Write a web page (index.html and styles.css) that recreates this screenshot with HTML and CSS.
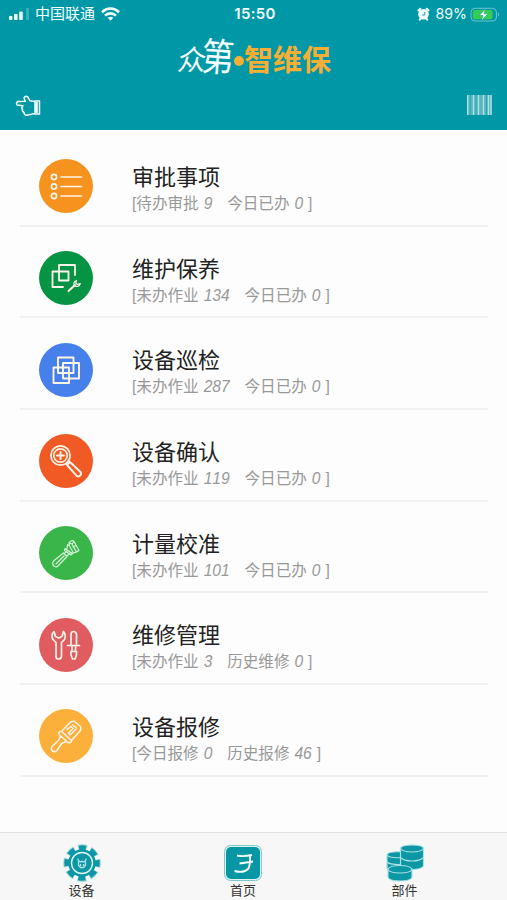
FILE: index.html
```html
<!DOCTYPE html>
<html lang="zh-CN">
<head>
<meta charset="utf-8">
<title>众第·智维保</title>
<link rel="stylesheet" href="styles.css">
</head>
<body>
<div class="app">
  <header class="header">
    <div class="status">
      <div class="status-left">
        <svg class="signal" width="21" height="13" viewBox="0 0 21 13" fill="#e8f8f9"><rect x="0" y="8" width="3.4" height="4" rx=".8"/><rect x="5" y="6" width="3.6" height="6" rx=".8"/><rect x="10.2" y="3.5" width="3.6" height="8.500" rx=".8"/><rect x="17" y="0" width="3" height="12" rx=".8" opacity=".25"/></svg>
        <span class="carrier">中国联通</span>
        <svg class="wifi" width="19" height="14" viewBox="0 0 19 14" fill="none" stroke="#f4ffff" stroke-width="2.600"><path d="M1 5.200C6 .3 13 .3 18 5.200M4 8.600C7.200 5.600 11.800 5.600 15 8.600"/><path d="M6.700 10.800Q9.500 8.500 12.300 10.800L9.500 13.700Z" fill="#f4ffff" stroke="none"/></svg>
      </div>
      <div class="clock">15:50</div>
      <div class="status-right">
        <svg width="13" height="14" viewBox="0 0 13 14"><circle cx="6.500" cy="7.300" r="5.300" fill="#f4ffff"/><path d="M1.500 3.500 3.300 1.800M9.700 1.800l1.800 1.700M2.800 12.700l1.200-1.500m6.200 1.500L9 11.200" stroke="#f4ffff" stroke-width="2" stroke-linecap="round"/><path d="M7.800 5V8H5" fill="none" stroke="#0098a6" stroke-width=".9"/></svg>
        <span class="percent">89%</span>
        <svg width="31" height="15" viewBox="0 0 31 15"><rect x="1" y="1.300" width="25.500" height="12.700" rx="4" fill="none" stroke="#6cc3cb"/><path d="M28 5.300q2.300 2.200 0 4.400z" fill="#6cc3cb"/><rect x="2.800" y="3" width="19.700" height="9.300" rx="2.300" fill="#34ce50"/><path d="M15.500 2 9 8.500h4L11.500 13.400 18 6.800h-4z" fill="#fff" stroke="#14a390" stroke-width=".6"/></svg>
      </div>
    </div>
    <div class="logo"><span class="logo-a">众</span><span class="logo-b">第</span><i class="dot"></i><span class="logo-c">智维保</span></div>
    <div class="actions">
      <svg width="27" height="23" viewBox="0 0 27 23" fill="none" stroke="#f4ffff" stroke-width="1.500" stroke-linejoin="round"><path d="M20 6.500 15 5.800 12.500 1.700Q10 .6 9 3L10.300 6.200 3 6.500Q.7 7.700 2 10L8 10.700Q6 12.500 7.500 14.300Q6.800 16.300 9 17.500Q9 20 12 20.300L20 18.500"/><path d="M20 6h4.500v13H20z"/><path d="M21.500 7v11" stroke-width="2.600"/></svg>
      <svg width="27" height="20" viewBox="0 0 27 20"><rect x="1" y="0" width="25" height="20" fill="#54b8c1"/><path d="M1.700 0v20M7.500 0v20M12.500 0v20M17.500 0v20M22.500 0v20M25 0v20" stroke="#b5e0e4" stroke-width="1.300"/><path d="M4.200 0v20M10 0v20M20.500 0v20" stroke="#2ca8b4" stroke-width="1"/></svg>
    </div>
  </header>

  <main class="list">
    <section class="row">
      <svg class="icon orange" viewBox="0 0 54 54"><g stroke-width="1.700"><circle cx="15" cy="18" r="2.600"/><circle cx="15" cy="27.500" r="2.600"/><circle cx="15" cy="37" r="2.600"/><path d="M22 18h20.500M22 27.500h20.500M22 37h20.500"/></g></svg>
      <div class="text"><h2>审批事项</h2><p>[待办审批 <em>9</em>   今日已办 <em>0</em> ]</p></div>
    </section>
    <section class="row">
      <svg class="icon green" viewBox="0 0 54 54"><g stroke-width="1.800"><path d="M36 24V14H20v15.500h9.500V20.500H13.500v15.500H24"/><path d="M29.500 40 36 34" stroke-width="2"/><path d="M37.500 29.500Q33.600 31 35.500 35Q40 36.500 41.300 32.500L38.300 33.500 36.800 32z" stroke-width="1.200"/></g></svg>
      <div class="text"><h2>维护保养</h2><p>[未办作业 <em>134</em>   今日已办 <em>0</em> ]</p></div>
    </section>
    <section class="row">
      <svg class="icon blue" viewBox="0 0 54 54"><g stroke-width="1.900"><path d="M19 14.500h15.500V30H19zM24 20h16v15.500H24zM14.500 24.500H30V40H14.500z"/></g></svg>
      <div class="text"><h2>设备巡检</h2><p>[未办作业 <em>287</em>   今日已办 <em>0</em> ]</p></div>
    </section>
    <section class="row">
      <svg class="icon red" viewBox="0 0 54 54"><g stroke-width="1.700"><circle cx="21.500" cy="21.500" r="9.600"/><circle cx="21.500" cy="21.500" r="6.700"/><path d="M21.500 18v7M18 21.500h7" stroke-width="2"/><path d="M27.500 30.500 30.500 27.500"/><path d="M28.500 31.500Q28.500 28.500 31.500 28.500L41.500 38Q43 40.500 40.500 42Q38.800 43 37.500 41.700Z" stroke-width="2"/></g></svg>
      <div class="text"><h2>设备确认</h2><p>[未办作业 <em>119</em>   今日已办 <em>0</em> ]</p></div>
    </section>
    <section class="row">
      <svg class="icon lime" viewBox="0 0 54 54"><g stroke="#d6f5d8" stroke-width="1.200"><path d="M24.500 27 14.500 35Q12.500 38.500 15.500 40.500Q17.500 41.500 19 40L28 30.500ZM17 38 25 30M25.500 27.500 28.500 24.500M28 30 31 27M26 22.500 33.500 27.500 32 29 25.500 24.500ZM28 22.500 28.500 18.500 30.500 20 30 16.500 33 18 35 15.500 33.500 14.500 31 15.500M35 15.500 40 24.500 37.500 26 33 18M30.500 20 34.500 27 37.500 26M34 21 37 19.500"/></g></svg>
      <div class="text"><h2>计量校准</h2><p>[未办作业 <em>101</em>   今日已办 <em>0</em> ]</p></div>
    </section>
    <section class="row">
      <svg class="icon rose" viewBox="0 0 54 54"><g stroke-width="1.700"><path d="M15 13.500Q11.500 17 14 21.500L17 24.500V38.500Q17 41 19.500 41T22.500 38.500V24.500L25.500 21.500Q27.500 17 24.500 13.500L23 18.500 19.700 20 16.500 18.500Z"/><path d="M32 27.500V16.500Q32 13.500 34.500 13.500T37.500 16.500V27.500M28.500 27.500H40.500M33 27.500V33.500H36.500V27.500M32 33.500H37.500V37L36 41H33.500L32 37Z"/></g></svg>
      <div class="text"><h2>维修管理</h2><p>[未办作业 <em>3</em>   历史维修 <em>0</em> ]</p></div>
    </section>
    <section class="row">
      <svg class="icon amber" viewBox="0 0 54 54"><g stroke-width="1.500"><path d="M22.500 22.500 31 13.500Q33 11.500 35.500 12.500L41.500 17.500Q42.500 19.500 41 22L32.500 31.500ZM21 22.500Q18.500 24 20.500 26L29 33.500Q31.500 34.500 32.500 32M21.500 27 19.500 31.500 13 37.500Q11.500 40 13.500 42Q16 43.500 18 41.500L22.500 34.500 27.500 32.500M28 20.500 32 17.500 34 19.500 29.500 24 31 26 37 20M33.500 16 37 18.500"/></g></svg>
      <div class="text"><h2>设备报修</h2><p>[今日报修 <em>0</em>   历史报修 <em>46</em> ]</p></div>
    </section>
  </main>

  <nav class="tabs">
    <a class="tab">
      <svg width="40" height="38" viewBox="0 0 40 38"><circle cx="20" cy="19" r="16" fill="none" stroke="#9bd5da" stroke-width="5.500" stroke-dasharray="8.600 3.966" stroke-dashoffset="4.300"/><circle cx="20" cy="19" r="15.200" fill="none" stroke="#0c97a4" stroke-width="5" stroke-dasharray="7 4.938" stroke-dashoffset="3.500"/><circle cx="20" cy="19" r="13.800" fill="#0c97a4"/><circle cx="20" cy="19" r="10.500" fill="none" stroke="#dff4f5" stroke-width="1.400"/><path d="M15.800 14.500Q16 17 18.300 18L20 17.300 21.700 18Q24 17 24.200 14.500M16.500 17.500V21.500L18.500 23.500H21.500L23.500 21.500V17.500M18.500 20v2M21.500 20v2" fill="none" stroke="#b5e3e7" stroke-width="1.300"/></svg>
      <span>设备</span>
    </a>
    <a class="tab">
      <svg width="40" height="38" viewBox="0 0 40 38"><rect x="1.500" y="1.500" width="37" height="35" rx="6" fill="#e2f5f6" stroke="#7fc8ce" stroke-width="1"/><rect x="3" y="3" width="34" height="32" rx="5" fill="#0797a4"/><path d="M14 11.500Q20 13 29 11M16.500 19.500 30 17.500M27 11.500Q27.500 20 25.500 24.500Q21 29.500 11.500 27" fill="none" stroke="#f4ffff" stroke-width="1.900"/></svg>
      <span>首页</span>
    </a>
    <a class="tab">
      <svg width="40" height="38" viewBox="0 0 40 38" stroke="#a9e1e4" stroke-width="1.200" fill="#0c97a4"><path d="M2 10.500V24Q3 27.500 12 27.500H18V8Q4 7 2 10.500Z"/><path d="M2 11Q4 14.500 17 13.500M2 18Q5 21 17 20.500" fill="none"/><path d="M15.500 4V22Q18 25.500 27 25.500T38.500 22V4Q37 1 27 1T15.500 4Z"/><path d="M15.500 4.500Q18 8 27 8T38.500 4.500M15.500 13.500Q19 17 27 17T38.500 13.500" fill="none"/><path d="M3 25V33.500Q5 37 15 37T27 33.500V25Q25 21.500 15 21.500T3 25Z"/><path d="M3 25.500Q5 29 15 29T27 25.500" fill="none"/></svg>
      <span>部件</span>
    </a>
  </nav>
</div>
</body>
</html>
```
FILE: styles.css
```css
* { box-sizing: border-box; }
body {
  margin: 0;
  font-family: "Liberation Sans", "Noto Sans CJK SC", sans-serif;
  background: #fdfdfd;
}
svg { display: block; flex: none; }
.app { height: 900px; display: flex; flex-direction: column; overflow: hidden; }

.header {
  height: 130px;
  flex: none;
  background: #0098a6;
  color: #f4ffff;
  display: flex;
  flex-direction: column;
}
.status {
  height: 28px;
  padding: 0 6px 0 9px;
  display: grid;
  grid-template-columns: 1fr auto 1fr;
  align-items: center;
}
.status-left, .status-right { display: flex; align-items: center; }
.status-right { justify-content: flex-end; }
.carrier { font-size: 15px; line-height: 28px; margin: 0 6px 0 5px; }
.clock { font: bold 15px/28px Inter, sans-serif; font-weight: 600; letter-spacing: .3px; }
.percent { font: 14.200px/28px Inter, sans-serif; margin: 0 3px 0 5px; }

.logo { height: 66px; padding-left: 178px; display: flex; align-items: center; line-height: 40px; }
.logo span { display: block; flex: none; }
.logo-a { font-size: 28px; width: 23px; transform: skewX(-8deg); }
.logo-b { font-size: 36px; width: 33px; transform: translate(-1px, -3px) rotate(4deg) scale(.9, 1.08); }
.dot { width: 10px; height: 10px; border-radius: 50%; background: #f8ae35; flex: none; }
.logo-c { color: #f8ae35; font-size: 29px; font-weight: 700; }
.actions { display: flex; justify-content: space-between; padding: 1px 14px 0 15px; }

.list { flex: 1; padding: 5px 19px 0 20px; }
.row {
  height: 91.67px;
  border-bottom: 2px solid #f1f1f1;
  padding: 24.300px 0 0 19px;
  display: flex;
  align-items: flex-start;
}
.icon {
  width: 54px;
  height: 54px;
  border-radius: 50%;
  fill: none;
  stroke: #fff4ea;
  stroke-linecap: round;
  stroke-linejoin: round;
}
.orange { background: #f6921e; }
.green { background: #059444; }
.blue { background: #4680ea; }
.red { background: #f15a24; }
.lime { background: #39b54a; }
.rose { background: #e05c60; }
.amber { background: #fbb03b; }
.text { margin: 5.700px 0 0 39px; }
h2 { margin: 0; font-size: 22px; line-height: 26px; font-weight: 400; color: #222; }
p {
  margin: 2px 0 0;
  font-size: 15.600px;
  line-height: 22px;
  word-spacing: .6px;
  font-kerning: none;
  color: #999;
  white-space: pre;
}

.tabs {
  height: 68px;
  flex: none;
  background: #f7f7f7;
  border-top: 1px solid #e2e2e2;
  padding-right: 21px;
  display: flex;
  justify-content: center;
}
.tab {
  width: 161.500px;
  display: flex;
  flex-direction: column;
  align-items: center;
  padding-top: 11px;
  font-size: 13px;
  line-height: 16px;
  color: #333;
}
.tab span { margin-top: 1px; }
```
